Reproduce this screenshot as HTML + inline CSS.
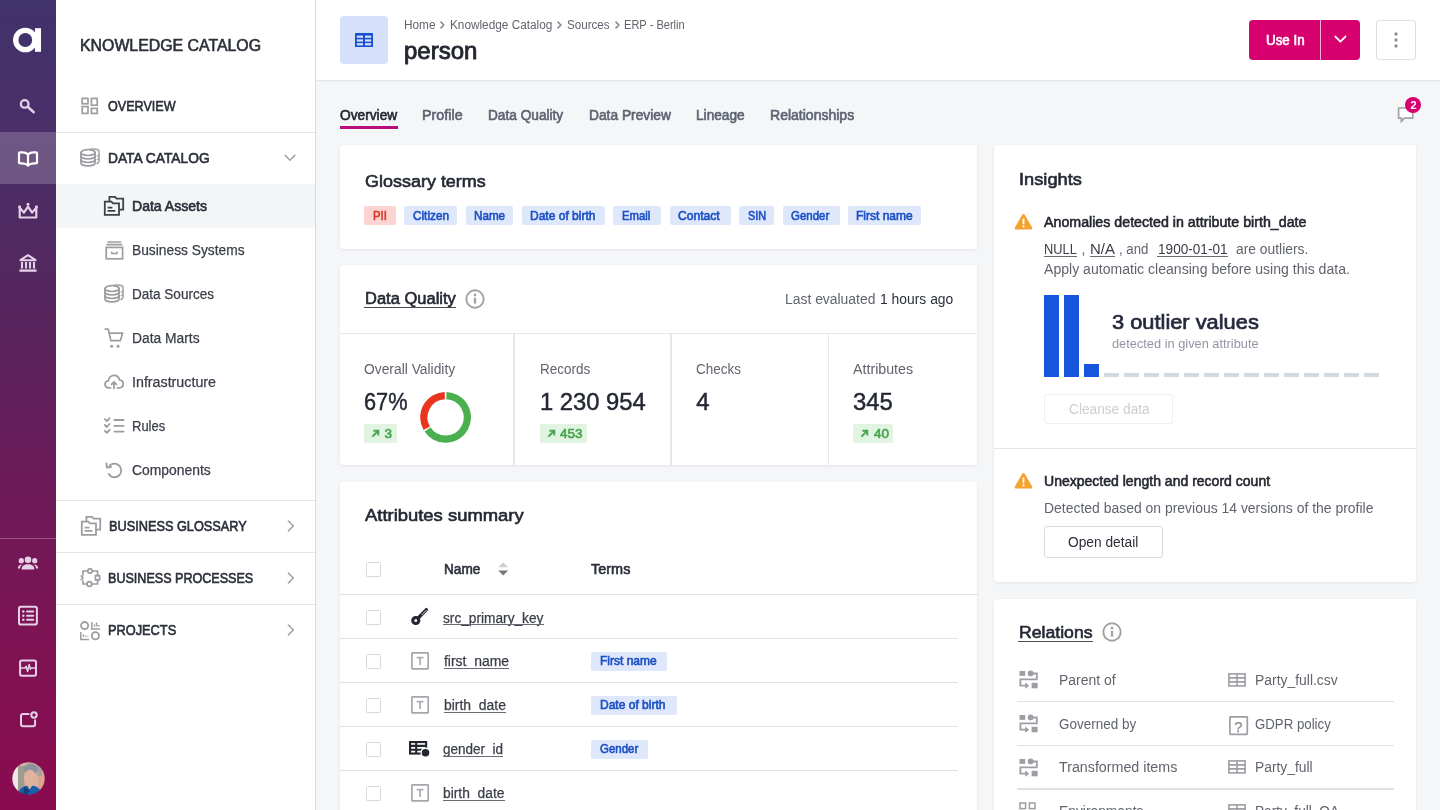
<!DOCTYPE html>
<html lang="en">
<head>
<meta charset="utf-8">
<title>person - Knowledge Catalog</title>
<style>
*{box-sizing:border-box;margin:0;padding:0}
html,body{width:1440px;height:810px;overflow:hidden;background:#f5f6f8;font-family:"Liberation Sans",Arial,sans-serif;color:#242833;-webkit-font-smoothing:antialiased}
#app{position:relative;width:1440px;height:810px;overflow:hidden;will-change:transform}
.abs{position:absolute}
svg{display:block;overflow:visible}
.t{position:absolute;white-space:nowrap;line-height:1;transform-origin:0 50%}
.med{-webkit-text-stroke:0.35px currentColor}

/* rail */
#rail{position:absolute;left:0;top:0;width:56px;height:810px;background:linear-gradient(180deg,#40326a 0%,#48306a 12%,#52285f 33%,#6a1b58 58%,#7b1454 76%,#8a0b4f 100%)}
#rail .active{position:absolute;left:0;top:132px;width:56px;height:52px;background:rgba(255,255,255,.2)}
#rail .sep{position:absolute;left:0;top:537.5px;width:56px;height:1px;background:rgba(255,255,255,.28)}
#rail svg{position:absolute}

/* sidebar */
#side{position:absolute;left:56px;top:0;width:260px;height:810px;background:#fff;border-right:1px solid #d9dadd}
#side .sep{position:absolute;left:0;width:259px;height:1px;background:#e4e5e7}
#side .sel{position:absolute;left:0;top:184px;width:259px;height:44px;background:#f4f5f7}
#side svg{position:absolute}

/* header */
#head{position:absolute;left:316px;top:0;width:1124px;height:81px;background:#fff;border-bottom:1px solid #e3e4e7;box-shadow:0 1px 2px rgba(0,0,0,.03)}
.card{position:absolute;background:#fff;border-radius:3px;box-shadow:0 1px 3px rgba(30,40,60,.09),0 0 1px rgba(30,40,60,.06)}
.tag{position:absolute;height:18px;border-radius:2px;background:#dce6fa;color:#1a4fc4;font-size:12px;line-height:18px;text-align:center;white-space:nowrap;-webkit-text-stroke:0.3px currentColor}
.tag.red{background:#fbd3d1;color:#d8382c}
.u{border-bottom:1px solid #4a4f58}
</style>
</head>
<body>
<div id="app">

<!-- ============ RAIL ============ -->
<div id="rail">
  <div class="active"></div>
  <div class="sep"></div>
  <svg style="position:absolute;left:0px;top:0px" width="56" height="80" viewBox="0 0 56 80" ><circle cx="25.3" cy="40" r="9.6" fill="none" stroke="#fff" stroke-width="5.4"/><rect x="35" y="28.2" width="6" height="23.6" fill="#fff"/></svg>
  <svg style="position:absolute;left:0px;top:80px" width="56" height="52" viewBox="0 0 56 52" ><g fill="none" stroke="#e6d0e8" stroke-width="2.3" stroke-linecap="round"><circle cx="24.7" cy="23.9" r="3.8"/><path d="M27.7 26.8 L33.7 32.2" stroke-width="2.5"/></g></svg>
  <svg style="position:absolute;left:0px;top:132px" width="56" height="52" viewBox="0 0 56 52" ><g fill="none" stroke="#fff" stroke-width="2.2" stroke-linejoin="round" stroke-linecap="round"><path d="M28 22.4 C26.6 21 24.6 20.4 22.4 20.4 H20.2 Q19 20.4 19 21.6 V30.4 Q19 31.4 20.2 31.4 H22.4 C24.6 31.4 26.6 32 28 33.6 C29.4 32 31.4 31.4 33.6 31.4 H35.8 Q37 31.4 37 30.4 V21.6 Q37 20.4 35.8 20.4 H33.6 C31.4 20.4 29.4 21 28 22.4 Z"/><path d="M28 22.6 V33.2"/></g></svg>
  <svg style="position:absolute;left:0px;top:184px" width="56" height="54" viewBox="0 0 56 54" ><path d="M19.7 23.6 V33.5 H36.3 V23.6 L32.1 28.6 L28 22.6 L23.9 28.6 Z" fill="none" stroke="#e6d0e8" stroke-width="2.2" stroke-linejoin="round"/><g fill="#e6d0e8"><circle cx="28" cy="20.2" r="1.5"/><circle cx="19.5" cy="22.8" r="1.5"/><circle cx="36.5" cy="22.8" r="1.5"/></g></svg>
  <svg style="position:absolute;left:0px;top:238px" width="56" height="52" viewBox="0 0 56 52" ><g fill="none" stroke="#e6d0e8" stroke-linejoin="round" stroke-linecap="butt"><path d="M20.4 22.2 L28 17.2 L35.6 22.2 Z" stroke-width="2.1"/><path d="M22 24 V30.6 M26 24 V30.6 M30 24 V30.6 M34 24 V30.6" stroke-width="2.1"/><path d="M19.4 32.6 H36.6" stroke-width="2.3"/></g></svg>
  <svg style="position:absolute;left:0px;top:537px" width="56" height="52" viewBox="0 0 56 52" ><g fill="#e6d0e8"><circle cx="28" cy="22.7" r="3.3"/><circle cx="21.3" cy="23.7" r="2.6"/><circle cx="34.7" cy="23.7" r="2.6"/><path d="M21.6 32.4 C21.6 28.8 24.4 27.2 28 27.2 C31.6 27.2 34.4 28.8 34.4 32.4 Z"/><path d="M17.8 31.6 C17.8 28.6 19.6 27.4 22.6 27.4 C20.8 28.4 20 29.8 20 31.6 Z"/><path d="M38.2 31.6 C38.2 28.6 36.4 27.4 33.4 27.4 C35.2 28.4 36 29.8 36 31.6 Z"/></g></svg>
  <svg style="position:absolute;left:0px;top:590px" width="56" height="52" viewBox="0 0 56 52" ><g fill="none" stroke="#e6d0e8" stroke-width="2" stroke-linecap="round"><rect x="19" y="16.8" width="17.9" height="17.8" rx="1.8"/><path d="M27 21.6 H33.2 M27 25.7 H33.2 M27 29.8 H33.2"/></g><g fill="#e6d0e8"><circle cx="23.3" cy="21.6" r="1.25"/><circle cx="23.3" cy="25.7" r="1.25"/><circle cx="23.3" cy="29.8" r="1.25"/></g></svg>
  <svg style="position:absolute;left:0px;top:642px" width="56" height="52" viewBox="0 0 56 52" ><g fill="none" stroke="#e6d0e8" stroke-linejoin="round" stroke-linecap="round"><rect x="20.1" y="18.4" width="15.9" height="15.3" rx="1.6" stroke-width="2"/><path d="M20.6 26 H25 L26.2 24.2 L27.6 29.6 L29.2 22.4 L30.4 27.2 L31.2 26 H35.6" stroke-width="1.5"/></g></svg>
  <svg style="position:absolute;left:0px;top:694px" width="56" height="52" viewBox="0 0 56 52" ><g fill="none" stroke="#e6d0e8" stroke-width="2" stroke-linejoin="round" stroke-linecap="round"><path d="M28.6 19.9 H23.2 Q21 19.9 21 22.1 V30 Q21 32.2 23.2 32.2 H32.9 Q35.1 32.2 35.1 30 V26.2"/><circle cx="34" cy="21" r="2.7"/></g></svg>
  <svg style="position:absolute;left:11.6px;top:761.6px" width="33" height="33" viewBox="0 0 33 33" ><defs><clipPath id="av"><circle cx="16.5" cy="16.5" r="16.2"/></clipPath><filter id="avb" x="-10%" y="-10%" width="120%" height="120%"><feGaussianBlur stdDeviation="0.7"/></filter></defs>
<g clip-path="url(#av)"><g filter="url(#avb)"><rect x="-2" y="-2" width="37" height="37" fill="#d8b3a4"/><rect x="-2" y="-2" width="8" height="37" fill="#ece8e6"/><rect x="6" y="4" width="6.4" height="30" fill="#a09c8f"/><rect x="26" y="6" width="9" height="20" fill="#dfa48f"/><rect x="25" y="2" width="5" height="12" fill="#a7a3a6"/>
<path d="M5 35 C6 26.5 11 23.4 18 23.4 C25 23.4 29.6 26.5 30.4 35 Z" fill="#1f5ea6"/>
<ellipse cx="18.6" cy="7.2" rx="7.2" ry="5.6" fill="#8d939d"/>
<ellipse cx="18" cy="15.6" rx="5.9" ry="7.9" fill="#e0b39d"/>
<path d="M14.6 22.6 L17.6 27.6 L21 22.6 Z" fill="#e0b39d"/>
<path d="M12.4 24.6 L17.6 29 L15 33 H11 Z" fill="#173f77"/></g></g></svg>
</div>

<!-- ============ SIDEBAR ============ -->
<div id="side">
  <div class="sel"></div>
  <span class="t" style="left:24.0px;top:37.6px;font-size:16px;color:#2b2f39;-webkit-text-stroke:0.6px currentColor;transform:scaleX(0.9915);">KNOWLEDGE CATALOG</span>
  <svg style="position:absolute;left:25px;top:97px" width="18" height="18" viewBox="0 0 18 18" ><g fill="none" stroke="#9b9da1" stroke-width="1.7"><rect x="1.2" y="1.4" width="5.8" height="5.4"/><rect x="10.4" y="1.4" width="5.8" height="6.8"/><rect x="1.2" y="9.6" width="5.8" height="6.8"/><rect x="10.4" y="11.4" width="5.8" height="5"/></g></svg>
  <span class="t" style="left:52.4px;top:99.2px;font-size:14px;color:#2b2f39;-webkit-text-stroke:0.6px currentColor;transform:scaleX(0.8989);">OVERVIEW</span>
  <div class="sep" style="top:132px"></div>
  <svg style="position:absolute;left:24px;top:148.4px" width="20" height="19" viewBox="0 0 20 19" ><g fill="none" stroke="#9b9da1" stroke-width="1.7" stroke-linecap="round">
<ellipse cx="8" cy="4.6" rx="7" ry="2.9"/>
<path d="M1 4.6 V15 C1 16.6 4.1 17.9 8 17.9 C11.9 17.9 15 16.6 15 15 V4.6"/>
<path d="M1 8.1 C1 9.7 4.1 11 8 11 C11.9 11 15 9.7 15 8.1"/>
<path d="M1 11.6 C1 13.2 4.1 14.5 8 14.5 C11.9 14.5 15 13.2 15 11.6"/>
<path d="M10.5 1.2 C14.6 0.4 19 1.4 19 3.2 V13.4 C19 14.4 18.2 15 17 15.5" stroke-width="1.4"/>
<path d="M19 6.7 C19 7.3 18.4 7.8 17.2 8.2 M19 10.2 C19 10.8 18.4 11.3 17.2 11.7" stroke-width="1.3"/>
</g></svg>
  <span class="t" style="left:52.4px;top:151.2px;font-size:14px;color:#2b2f39;-webkit-text-stroke:0.6px currentColor;transform:scaleX(0.9845);">DATA CATALOG</span>
  <svg style="position:absolute;left:228px;top:154px" width="12" height="8" viewBox="0 0 12 8" ><path d="M1.2 1.4 L6 6.2 L10.8 1.4" fill="none" stroke="#a3a5a9" stroke-width="1.6" stroke-linecap="round" stroke-linejoin="round"/></svg>
  <svg style="position:absolute;left:48.2px;top:196.2px" width="20" height="20" viewBox="0 0 20 20" ><g fill="none" stroke="#3d414b" stroke-width="1.8" stroke-linejoin="miter">
<path d="M5.4 5.2 V0.9 H11 L12.6 2.6 H19.2 V13.6 H15.4"/>
<path d="M0.8 5.6 H7.4 L9 7.4 H15 V18.8 H0.8 Z"/>
<path d="M3.6 11.6 H8.4 M3.6 14.8 H11.4" stroke-width="1.7"/></g></svg>
  <span class="t" style="left:76.4px;top:199.2px;font-size:14px;color:#2b2f39;-webkit-text-stroke:0.6px currentColor;transform:scaleX(1.0040);">Data Assets</span>
  <svg style="position:absolute;left:48.599999999999994px;top:240.6px" width="19" height="19" viewBox="0 0 19 19" ><g fill="none" stroke="#9b9da1" stroke-width="1.7"><path d="M2.4 1 H16.2 M1.4 3.6 H17.2"/><rect x="1.2" y="6.4" width="16.4" height="11.4"/><path d="M6.8 10.6 V12.6 H12 V10.6" stroke-width="1.5"/></g></svg>
  <span class="t" style="left:76.4px;top:243.2px;font-size:14px;color:#3a3e48;-webkit-text-stroke:0.25px currentColor;transform:scaleX(0.9845);">Business Systems</span>
  <svg style="position:absolute;left:48px;top:284.4px" width="20" height="19" viewBox="0 0 20 19" ><g fill="none" stroke="#9b9da1" stroke-width="1.7" stroke-linecap="round">
<ellipse cx="8" cy="4.6" rx="7" ry="2.9"/>
<path d="M1 4.6 V15 C1 16.6 4.1 17.9 8 17.9 C11.9 17.9 15 16.6 15 15 V4.6"/>
<path d="M1 8.1 C1 9.7 4.1 11 8 11 C11.9 11 15 9.7 15 8.1"/>
<path d="M1 11.6 C1 13.2 4.1 14.5 8 14.5 C11.9 14.5 15 13.2 15 11.6"/>
<path d="M10.5 1.2 C14.6 0.4 19 1.4 19 3.2 V13.4 C19 14.4 18.2 15 17 15.5" stroke-width="1.4"/>
<path d="M19 6.7 C19 7.3 18.4 7.8 17.2 8.2 M19 10.2 C19 10.8 18.4 11.3 17.2 11.7" stroke-width="1.3"/>
</g></svg>
  <span class="t" style="left:76.4px;top:287.2px;font-size:14px;color:#3a3e48;-webkit-text-stroke:0.25px currentColor;transform:scaleX(0.9667);">Data Sources</span>
  <svg style="position:absolute;left:48px;top:327.6px" width="20" height="21" viewBox="0 0 20 21" ><g fill="none" stroke="#9b9da1" stroke-width="1.7" stroke-linejoin="round"><path d="M0.6 1.2 H4.2 L5.2 5.2 M5.2 5.2 H18.6 L16.4 12.6 H6.8 Z"/></g><g fill="#9b9da1"><circle cx="7.6" cy="18.2" r="1.5"/><circle cx="14" cy="18.2" r="1.5"/></g></svg>
  <span class="t" style="left:76.4px;top:331.2px;font-size:14px;color:#3a3e48;-webkit-text-stroke:0.25px currentColor;transform:scaleX(0.9873);">Data Marts</span>
  <svg style="position:absolute;left:48px;top:374.4px" width="20" height="16" viewBox="0 0 20 16" ><g fill="none" stroke="#9b9da1" stroke-width="1.8" stroke-linecap="round" stroke-linejoin="round"><path d="M6.6 13.8 H4.8 C2.4 13.8 1 12.2 1 10.2 C1 8.2 2.6 6.8 4.4 6.8 C4.8 3.6 7.2 1.4 10 1.4 C12.8 1.4 14.8 3.2 15.4 5.8 C17.6 6 19.2 7.6 19.2 9.8 C19.2 12.2 17.6 13.8 15.4 13.8 H13.4"/><path d="M10 14.4 V8.4 M7.6 10.4 L10 8 L12.4 10.4"/></g></svg>
  <span class="t" style="left:76.4px;top:375.2px;font-size:14px;color:#3a3e48;-webkit-text-stroke:0.25px currentColor;transform:scaleX(1.0184);">Infrastructure</span>
  <svg style="position:absolute;left:48px;top:417px" width="21" height="18" viewBox="0 0 21 18" ><g fill="none" stroke="#9b9da1" stroke-width="1.8" stroke-linecap="round" stroke-linejoin="round"><path d="M0.9 2.2 L2.9 4.2 L5.6 1.2 M0.9 8 L2.9 10 L5.6 7 M0.9 13.8 L2.9 15.8 L5.6 12.8"/><path d="M10.4 3 H19.6 M10.4 8.8 H19.6 M10.4 14.6 H19.6"/></g></svg>
  <span class="t" style="left:76.4px;top:419.2px;font-size:14px;color:#3a3e48;-webkit-text-stroke:0.25px currentColor;transform:scaleX(0.9275);">Rules</span>
  <svg style="position:absolute;left:49px;top:461.6px" width="18" height="17" viewBox="0 0 18 17" ><g fill="none" stroke="#9b9da1" stroke-width="1.85" stroke-linecap="round" stroke-linejoin="round"><path d="M4.6 3.6 C6 2.2 7.6 1.6 9.4 1.6 C13.2 1.6 16.2 4.6 16.2 8.4 C16.2 12.2 13.2 15.2 9.4 15.2 C7 15.2 4.9 14 3.7 12"/><path d="M1.4 1.4 L1.9 5.6 L6 5"/></g></svg>
  <span class="t" style="left:76.4px;top:463.2px;font-size:14px;color:#3a3e48;-webkit-text-stroke:0.25px currentColor;transform:scaleX(0.9926);">Components</span>
  <div class="sep" style="top:500px"></div>
  <svg style="position:absolute;left:24.599999999999994px;top:516px" width="20" height="20" viewBox="0 0 20 20" ><g fill="none" stroke="#9b9da1" stroke-width="1.8" stroke-linejoin="miter">
<path d="M5.4 5.2 V0.9 H11 L12.6 2.6 H19.2 V13.6 H15.4"/>
<path d="M0.8 5.6 H7.4 L9 7.4 H15 V18.8 H0.8 Z"/>
<path d="M3.6 11.6 H8.4 M3.6 14.8 H11.4" stroke-width="1.7"/></g></svg>
  <span class="t" style="left:53.2px;top:519.2px;font-size:14px;color:#2b2f39;-webkit-text-stroke:0.6px currentColor;transform:scaleX(0.9098);">BUSINESS GLOSSARY</span>
  <svg style="position:absolute;left:230.60000000000002px;top:520px" width="8" height="12" viewBox="0 0 8 12" ><path d="M1.4 1.2 L6.4 6 L1.4 10.8" fill="none" stroke="#a3a5a9" stroke-width="1.6" stroke-linecap="round" stroke-linejoin="round"/></svg>
  <div class="sep" style="top:552px"></div>
  <svg style="position:absolute;left:23.599999999999994px;top:568.2px" width="21" height="20" viewBox="0 0 21 20" ><g fill="none" stroke="#9b9da1" stroke-width="1.7" stroke-linejoin="round"><circle cx="10" cy="3" r="2.2"/><rect x="15.4" y="7.6" width="4.2" height="4.2"/><circle cx="9.4" cy="16" r="2.4"/><path d="M0.8 7.4 L3 9.8 L0.8 12.2"/><path d="M7.8 3 H3 V7.4 M3 12.2 V16 H7 M11.8 16 H17.6 V11.8 M17.6 7.6 V3 H12.2"/></g></svg>
  <span class="t" style="left:52.4px;top:571.2px;font-size:14px;color:#2b2f39;-webkit-text-stroke:0.6px currentColor;transform:scaleX(0.8972);">BUSINESS PROCESSES</span>
  <svg style="position:absolute;left:230.60000000000002px;top:572px" width="8" height="12" viewBox="0 0 8 12" ><path d="M1.4 1.2 L6.4 6 L1.4 10.8" fill="none" stroke="#a3a5a9" stroke-width="1.6" stroke-linecap="round" stroke-linejoin="round"/></svg>
  <div class="sep" style="top:604px"></div>
  <svg style="position:absolute;left:23.599999999999994px;top:620.6px" width="21" height="20" viewBox="0 0 21 20" ><g fill="none" stroke="#9b9da1" stroke-width="1.8"><circle cx="4.6" cy="4.6" r="3.6"/><circle cx="15.4" cy="14.8" r="3.6"/></g><g fill="none" stroke="#9b9da1" stroke-width="1.5"><path d="M11.8 1 V8 H20 M14.4 3.4 V5.4 M16.6 1.6 V5.4 M18.8 4 V5.4"/><path d="M0.8 11 V18.4 H9 M3.4 13.4 V15.8 M5.6 14.6 V15.8 M7.8 15 V15.8"/></g></svg>
  <span class="t" style="left:52.4px;top:623.2px;font-size:14px;color:#2b2f39;-webkit-text-stroke:0.6px currentColor;transform:scaleX(0.9131);">PROJECTS</span>
  <svg style="position:absolute;left:230.60000000000002px;top:624px" width="8" height="12" viewBox="0 0 8 12" ><path d="M1.4 1.2 L6.4 6 L1.4 10.8" fill="none" stroke="#a3a5a9" stroke-width="1.6" stroke-linecap="round" stroke-linejoin="round"/></svg>
</div>

<!-- ============ HEADER ============ -->
<div id="head">
  <div class="abs" style="left:24px;top:16px;width:48px;height:48px;border-radius:4px;background:#d5e0fa"></div>
  <svg style="position:absolute;left:39px;top:33px" width="18" height="14" viewBox="0 0 18 14" ><rect x="0" y="0" width="18" height="14" rx="0.6" fill="#1a4fd0"/><g fill="#d5e0fa"><rect x="1.8" y="2.6" width="6.2" height="2.2"/><rect x="10" y="2.6" width="6.2" height="2.2"/><rect x="1.8" y="6.4" width="6.2" height="2.2"/><rect x="10" y="6.4" width="6.2" height="2.2"/><rect x="1.8" y="10.2" width="6.2" height="2.2"/><rect x="10" y="10.2" width="6.2" height="2.2"/></g></svg>
  <span class="t" style="left:88.0px;top:18.8px;font-size:12px;color:#60646d;transform:scaleX(0.9839);">Home</span>
  <span class="t" style="left:134.3px;top:18.8px;font-size:12px;color:#60646d;transform:scaleX(0.9829);">Knowledge Catalog</span>
  <span class="t" style="left:250.9px;top:18.8px;font-size:12px;color:#60646d;transform:scaleX(0.9675);">Sources</span>
  <span class="t" style="left:308.3px;top:18.8px;font-size:12px;color:#60646d;transform:scaleX(0.9223);">ERP - Berlin</span>
  <svg style="position:absolute;left:124.30000000000001px;top:21px" width="5" height="8" viewBox="0 0 5 8" ><path d="M1 1.1 L3.9 4 L1 6.9" fill="none" stroke="#80848c" stroke-width="1.5" stroke-linecap="round" stroke-linejoin="round"/></svg>
  <svg style="position:absolute;left:241.39999999999998px;top:21px" width="5" height="8" viewBox="0 0 5 8" ><path d="M1 1.1 L3.9 4 L1 6.9" fill="none" stroke="#80848c" stroke-width="1.5" stroke-linecap="round" stroke-linejoin="round"/></svg>
  <svg style="position:absolute;left:298.5px;top:21px" width="5" height="8" viewBox="0 0 5 8" ><path d="M1 1.1 L3.9 4 L1 6.9" fill="none" stroke="#80848c" stroke-width="1.5" stroke-linecap="round" stroke-linejoin="round"/></svg>
  <span class="t" style="left:88.0px;top:39.0px;font-size:24px;color:#23262f;-webkit-text-stroke:0.6px currentColor;transform:scaleX(1.0001);-webkit-text-stroke:0.85px currentColor;">person</span>
  <div class="abs" style="left:933px;top:20px;width:111px;height:40px;border-radius:4px;background:#d6006e"></div>
  <div class="abs" style="left:1004px;top:20px;width:1px;height:40px;background:#f3b6d6"></div>
  <span class="t" style="left:949.6px;top:33.2px;font-size:14px;color:#fff;-webkit-text-stroke:0.6px currentColor;transform:scaleX(0.9563);">Use In</span>
  <svg style="position:absolute;left:1018px;top:35.4px" width="13" height="9" viewBox="0 0 13 9" ><path d="M1.4 1.6 L6.4 6.6 L11.4 1.6" fill="none" stroke="#fff" stroke-width="1.9" stroke-linecap="round" stroke-linejoin="round"/></svg>
  <div class="abs" style="left:1060px;top:20px;width:39.6px;height:40px;border-radius:3px;background:#fff;border:1px solid #dcdfe3"></div>
  <svg style="position:absolute;left:1077px;top:31px" width="6" height="18" viewBox="0 0 6 18" ><g fill="#8e9197"><circle cx="3" cy="3" r="1.7"/><circle cx="3" cy="9" r="1.7"/><circle cx="3" cy="15" r="1.7"/></g></svg>
</div>

<span class="t" style="left:340.3px;top:108.2px;font-size:14px;color:#23262f;-webkit-text-stroke:0.6px currentColor;transform:scaleX(0.9801);">Overview</span>
<span class="t" style="left:421.9px;top:108.2px;font-size:14px;color:#5d6370;-webkit-text-stroke:0.6px currentColor;transform:scaleX(1.0230);">Profile</span>
<span class="t" style="left:488.3px;top:108.2px;font-size:14px;color:#5d6370;-webkit-text-stroke:0.6px currentColor;transform:scaleX(0.9760);">Data Quality</span>
<span class="t" style="left:589.0px;top:108.2px;font-size:14px;color:#5d6370;-webkit-text-stroke:0.6px currentColor;transform:scaleX(0.9836);">Data Preview</span>
<span class="t" style="left:696.3px;top:108.2px;font-size:14px;color:#5d6370;-webkit-text-stroke:0.6px currentColor;transform:scaleX(0.9754);">Lineage</span>
<span class="t" style="left:770.4px;top:108.2px;font-size:14px;color:#5d6370;-webkit-text-stroke:0.6px currentColor;transform:scaleX(1.0016);">Relationships</span>
<div class="abs" style="left:340px;top:126.3px;width:58px;height:2.4px;background:#b80d7c"></div>
<svg style="position:absolute;left:1397.4px;top:106px" width="18" height="18" viewBox="0 0 18 18" ><path d="M1.6 2 H15.8 V12.2 H7.4 L4.4 15.4 V12.2 H1.6 Z" fill="#fff" stroke="#a0a3a8" stroke-width="1.7" stroke-linejoin="miter"/></svg>
<div class="abs" style="left:1405.2px;top:97.2px;width:16px;height:16px;border-radius:8px;background:#d6006e"></div>
<span class="t" style="left:1410.4px;top:99.8px;font-size:11px;color:#fff;font-weight:700;">2</span>

<div class="card" style="left:340px;top:145px;width:637.2px;height:103.6px"></div>
<span class="t" style="left:364.5px;top:172.9px;font-size:17px;color:#242833;-webkit-text-stroke:0.6px currentColor;transform:scaleX(1.0569);">Glossary terms</span>
<div class="abs" style="left:364.4px;top:206.0px;width:31.6px;height:18.8px;border-radius:2px;background:#fbd3d1"></div><span class="t" style="left:372.6px;top:209.7px;font-size:12px;color:#d8382c;-webkit-text-stroke:0.6px currentColor;transform:scaleX(0.9406);">PII</span>
<div class="abs" style="left:404.3px;top:206.0px;width:53.1px;height:18.8px;border-radius:2px;background:#dfe8fb"></div><span class="t" style="left:412.5px;top:209.7px;font-size:12px;color:#1a4fc4;-webkit-text-stroke:0.6px currentColor;transform:scaleX(0.9813);">Citizen</span>
<div class="abs" style="left:466.1px;top:206.0px;width:47.2px;height:18.8px;border-radius:2px;background:#dfe8fb"></div><span class="t" style="left:474.3px;top:209.7px;font-size:12px;color:#1a4fc4;-webkit-text-stroke:0.6px currentColor;transform:scaleX(0.9714);">Name</span>
<div class="abs" style="left:522.0px;top:206.0px;width:82.5px;height:18.8px;border-radius:2px;background:#dfe8fb"></div><span class="t" style="left:530.2px;top:209.7px;font-size:12px;color:#1a4fc4;-webkit-text-stroke:0.6px currentColor;transform:scaleX(1.0019);">Date of birth</span>
<div class="abs" style="left:613.3px;top:206.0px;width:48.1px;height:18.8px;border-radius:2px;background:#dfe8fb"></div><span class="t" style="left:621.5px;top:209.7px;font-size:12px;color:#1a4fc4;-webkit-text-stroke:0.6px currentColor;transform:scaleX(0.9462);">Email</span>
<div class="abs" style="left:670.1px;top:206.0px;width:60.5px;height:18.8px;border-radius:2px;background:#dfe8fb"></div><span class="t" style="left:678.3px;top:209.7px;font-size:12px;color:#1a4fc4;-webkit-text-stroke:0.6px currentColor;transform:scaleX(1.0058);">Contact</span>
<div class="abs" style="left:739.3px;top:206.0px;width:34.8px;height:18.8px;border-radius:2px;background:#dfe8fb"></div><span class="t" style="left:747.5px;top:209.7px;font-size:12px;color:#1a4fc4;-webkit-text-stroke:0.6px currentColor;transform:scaleX(0.9093);">SIN</span>
<div class="abs" style="left:782.8px;top:206.0px;width:56.9px;height:18.8px;border-radius:2px;background:#dfe8fb"></div><span class="t" style="left:791.0px;top:209.7px;font-size:12px;color:#1a4fc4;-webkit-text-stroke:0.6px currentColor;transform:scaleX(0.9543);">Gender</span>
<div class="abs" style="left:847.9px;top:206.0px;width:73.3px;height:18.8px;border-radius:2px;background:#dfe8fb"></div><span class="t" style="left:856.1px;top:209.7px;font-size:12px;color:#1a4fc4;-webkit-text-stroke:0.6px currentColor;transform:scaleX(1.0002);">First name</span>
<div class="card" style="left:340px;top:265.2px;width:637.2px;height:200px"></div>
<span class="t" style="left:364.6px;top:291.0px;font-size:16.6px;color:#242833;-webkit-text-stroke:0.6px currentColor;transform:scaleX(0.9944);">Data Quality</span>
<div class="abs" style="left:364.4px;top:306.5px;width:91.4px;height:1.1px;background:#464a53"></div>
<svg style="position:absolute;left:464.7px;top:289.1px" width="20" height="20" viewBox="0 0 20 20" ><circle cx="10" cy="10" r="8.7" fill="none" stroke="#a0a2a6" stroke-width="1.9"/><rect x="8.85" y="8.7" width="2.3" height="5.9" fill="#a0a2a6"/><circle cx="10" cy="5.9" r="1.3" fill="#a0a2a6"/></svg>
<span class="t" style="left:785.1px;top:292.2px;font-size:14px;color:#60646d;transform:scaleX(0.9926);">Last evaluated</span>
<span class="t" style="left:879.6px;top:292.2px;font-size:14px;color:#2b2f39;transform:scaleX(0.9912);">1 hours ago</span>
<div class="abs" style="left:340px;top:333px;width:637.5px;height:1.4px;background:#e6e7ea"></div>
<div class="abs" style="left:513.2px;top:334px;width:1.4px;height:131px;background:#e6e7ea"></div>
<div class="abs" style="left:670.4px;top:334px;width:1.4px;height:131px;background:#e6e7ea"></div>
<div class="abs" style="left:827.6px;top:334px;width:1.4px;height:131px;background:#e6e7ea"></div>
<span class="t" style="left:364.4px;top:361.9px;font-size:14px;color:#60646d;transform:scaleX(0.9878);">Overall Validity</span>
<span class="t" style="left:364.4px;top:389.7px;font-size:24px;color:#242833;transform:scaleX(0.9054);-webkit-text-stroke:0.45px currentColor;">67%</span>
<div class="abs" style="left:364.4px;top:423.5px;width:32.2px;height:19px;border-radius:2px;background:#e1f3e1"></div><svg style="position:absolute;left:371.4px;top:428.9px" width="9" height="9" viewBox="0 0 9 9" ><path d="M1.4 7.6 L6.8 2.2 M2.4 1.7 H7.3 V6.6" fill="none" stroke="#46a54c" stroke-width="1.9" stroke-linecap="butt" stroke-linejoin="miter"/></svg><span class="t" style="left:384.5px;top:426.6px;font-size:13.5px;color:#46a54c;-webkit-text-stroke:0.6px currentColor;">3</span>
<svg class="abs" style="left:0;top:0" width="1440" height="810"><path d="M446.43 395.67 A21.75 21.75 0 1 1 427.57 429.56" fill="none" stroke="#4bae4f" stroke-width="7.3"/><path d="M426.76 428.27 A21.75 21.75 0 0 1 444.77 395.67" fill="none" stroke="#e8351f" stroke-width="7.3"/></svg>
<span class="t" style="left:539.5px;top:361.9px;font-size:14px;color:#60646d;transform:scaleX(0.9666);">Records</span>
<span class="t" style="left:539.5px;top:389.7px;font-size:24px;color:#242833;transform:scaleX(0.9908);-webkit-text-stroke:0.45px currentColor;">1 230 954</span>
<div class="abs" style="left:539.5px;top:423.5px;width:47.8px;height:19px;border-radius:2px;background:#e1f3e1"></div><svg style="position:absolute;left:546.5px;top:428.9px" width="9" height="9" viewBox="0 0 9 9" ><path d="M1.4 7.6 L6.8 2.2 M2.4 1.7 H7.3 V6.6" fill="none" stroke="#46a54c" stroke-width="1.9" stroke-linecap="butt" stroke-linejoin="miter"/></svg><span class="t" style="left:559.6px;top:426.6px;font-size:13.5px;color:#46a54c;-webkit-text-stroke:0.6px currentColor;transform:scaleX(0.9986);">453</span>
<span class="t" style="left:696.2px;top:361.9px;font-size:14px;color:#60646d;transform:scaleX(0.9639);">Checks</span>
<span class="t" style="left:696.2px;top:389.7px;font-size:24px;color:#242833;-webkit-text-stroke:0.45px currentColor;">4</span>
<span class="t" style="left:853.4px;top:361.9px;font-size:14px;color:#60646d;transform:scaleX(1.0162);">Attributes</span>
<span class="t" style="left:853.4px;top:389.7px;font-size:24px;color:#242833;transform:scaleX(0.9963);-webkit-text-stroke:0.45px currentColor;">345</span>
<div class="abs" style="left:853.4px;top:423.5px;width:40.0px;height:19px;border-radius:2px;background:#e1f3e1"></div><svg style="position:absolute;left:860.4px;top:428.9px" width="9" height="9" viewBox="0 0 9 9" ><path d="M1.4 7.6 L6.8 2.2 M2.4 1.7 H7.3 V6.6" fill="none" stroke="#46a54c" stroke-width="1.9" stroke-linecap="butt" stroke-linejoin="miter"/></svg><span class="t" style="left:873.5px;top:426.6px;font-size:13.5px;color:#46a54c;-webkit-text-stroke:0.6px currentColor;transform:scaleX(0.9979);">40</span>
<div class="card" style="left:340px;top:482px;width:637.2px;height:340px"></div>
<span class="t" style="left:365.0px;top:506.9px;font-size:17px;color:#242833;-webkit-text-stroke:0.6px currentColor;transform:scaleX(1.0837);">Attributes summary</span>
<div class="abs" style="left:366.4px;top:561.6px;width:15px;height:15px;border:1.2px solid #d6d8dc;border-radius:1.5px;background:#fff"></div>
<span class="t" style="left:443.6px;top:562.3px;font-size:14px;color:#2b2f39;-webkit-text-stroke:0.6px currentColor;transform:scaleX(0.9743);">Name</span>
<svg style="position:absolute;left:497.7px;top:562.4px" width="10.4" height="14" viewBox="0 0 10.4 14" ><path d="M5.2 0.2 L10.2 5.2 H0.2 Z" fill="#cdcfd3"/><path d="M5.2 13.6 L10.2 8.6 H0.2 Z" fill="#74777d"/></svg>
<span class="t" style="left:591.3px;top:562.3px;font-size:14px;color:#2b2f39;-webkit-text-stroke:0.6px currentColor;transform:scaleX(1.0334);">Terms</span>
<div class="abs" style="left:340px;top:594px;width:637.5px;height:1.2px;background:#dfe1e5"></div>
<div class="abs" style="left:366.4px;top:609.7px;width:15px;height:15px;border:1.2px solid #d6d8dc;border-radius:1.5px;background:#fff"></div>
<svg style="position:absolute;left:411px;top:609.4px" width="17" height="16" viewBox="0 0 17 16" ><path d="M7.2 9 L15.4 0.6" fill="none" stroke="#23262f" stroke-width="3.3" stroke-linecap="round"/><path d="M10.6 6 L15.6 0.9" fill="none" stroke="#fff" stroke-width="0.8"/><circle cx="4.8" cy="11.5" r="3.05" fill="#fff" stroke="#23262f" stroke-width="3.1"/></svg>
<span class="t" style="left:443.2px;top:610.6px;font-size:14px;color:#3a3e48;-webkit-text-stroke:0.25px currentColor;transform:scaleX(0.9776);">src_primary_key</span>
<div class="abs" style="left:443.2px;top:624.0px;width:100.4px;height:1px;background:#686c74"></div>
<div class="abs" style="left:340px;top:638.2px;width:618px;height:1.2px;background:#dfe1e5"></div>
<div class="abs" style="left:366.4px;top:653.5px;width:15px;height:15px;border:1.2px solid #d6d8dc;border-radius:1.5px;background:#fff"></div>
<svg style="position:absolute;left:410.6px;top:652.3000000000001px" width="18" height="18" viewBox="0 0 18 18" ><rect x="0.9" y="0.9" width="16.3" height="15.9" rx="0.3" fill="none" stroke="#a4a7ac" stroke-width="1.7"/><path d="M5.7 5.7 H12.5 M9.1 5.7 V12.9" fill="none" stroke="#abaeb3" stroke-width="1.7"/></svg>
<span class="t" style="left:444.1px;top:654.4px;font-size:14px;color:#3a3e48;-webkit-text-stroke:0.25px currentColor;transform:scaleX(0.9960);">first_name</span>
<div class="abs" style="left:444.1px;top:667.8px;width:65.1px;height:1px;background:#686c74"></div>
<div class="abs" style="left:591.3px;top:651.6px;width:76.0px;height:19px;border-radius:2px;background:#dfe8fb"></div><span class="t" style="left:599.5px;top:655.4px;font-size:12px;color:#1a4fc4;-webkit-text-stroke:0.6px currentColor;transform:scaleX(1.0002);">First name</span>
<div class="abs" style="left:340px;top:682.0px;width:618px;height:1.2px;background:#dfe1e5"></div>
<div class="abs" style="left:366.4px;top:697.5px;width:15px;height:15px;border:1.2px solid #d6d8dc;border-radius:1.5px;background:#fff"></div>
<svg style="position:absolute;left:410.6px;top:696.3000000000001px" width="18" height="18" viewBox="0 0 18 18" ><rect x="0.9" y="0.9" width="16.3" height="15.9" rx="0.3" fill="none" stroke="#a4a7ac" stroke-width="1.7"/><path d="M5.7 5.7 H12.5 M9.1 5.7 V12.9" fill="none" stroke="#abaeb3" stroke-width="1.7"/></svg>
<span class="t" style="left:444.1px;top:698.4px;font-size:14px;color:#3a3e48;-webkit-text-stroke:0.25px currentColor;transform:scaleX(0.9939);">birth_date</span>
<div class="abs" style="left:444.1px;top:711.8px;width:61.9px;height:1px;background:#686c74"></div>
<div class="abs" style="left:591.3px;top:695.6px;width:85.7px;height:19px;border-radius:2px;background:#dfe8fb"></div><span class="t" style="left:599.5px;top:699.4px;font-size:12px;color:#1a4fc4;-webkit-text-stroke:0.6px currentColor;transform:scaleX(1.0019);">Date of birth</span>
<div class="abs" style="left:340px;top:726.0px;width:618px;height:1.2px;background:#dfe1e5"></div>
<div class="abs" style="left:366.4px;top:741.5px;width:15px;height:15px;border:1.2px solid #d6d8dc;border-radius:1.5px;background:#fff"></div>
<svg style="position:absolute;left:409.4px;top:741.2px" width="22" height="17" viewBox="0 0 22 17" ><g fill="none" stroke="#23262f" stroke-width="2.1"><rect x="1.05" y="1.05" width="16.1" height="11.5"/><path d="M1 4.9 H17.1 M1 8.75 H17.1 M7.2 1 V12.5"/></g><circle cx="16.5" cy="11.7" r="5.1" fill="#fff"/><circle cx="16.5" cy="11.7" r="3.8" fill="#23262f"/></svg>
<span class="t" style="left:443.2px;top:742.4px;font-size:14px;color:#3a3e48;-webkit-text-stroke:0.25px currentColor;transform:scaleX(0.9650);">gender_id</span>
<div class="abs" style="left:443.2px;top:755.8px;width:60.1px;height:1px;background:#686c74"></div>
<div class="abs" style="left:591.3px;top:739.6px;width:56.3px;height:19px;border-radius:2px;background:#dfe8fb"></div><span class="t" style="left:599.5px;top:743.4px;font-size:12px;color:#1a4fc4;-webkit-text-stroke:0.6px currentColor;transform:scaleX(0.9543);">Gender</span>
<div class="abs" style="left:340px;top:770.0px;width:618px;height:1.2px;background:#dfe1e5"></div>
<div class="abs" style="left:366.4px;top:785.5px;width:15px;height:15px;border:1.2px solid #d6d8dc;border-radius:1.5px;background:#fff"></div>
<svg style="position:absolute;left:410.6px;top:784.3000000000001px" width="18" height="18" viewBox="0 0 18 18" ><rect x="0.9" y="0.9" width="16.3" height="15.9" rx="0.3" fill="none" stroke="#a4a7ac" stroke-width="1.7"/><path d="M5.7 5.7 H12.5 M9.1 5.7 V12.9" fill="none" stroke="#abaeb3" stroke-width="1.7"/></svg>
<span class="t" style="left:443.2px;top:786.4px;font-size:14px;color:#3a3e48;-webkit-text-stroke:0.25px currentColor;transform:scaleX(0.9859);">birth_date</span>
<div class="abs" style="left:443.2px;top:799.8px;width:61.4px;height:1px;background:#686c74"></div>

<div class="card" style="left:994.2px;top:145px;width:421.8px;height:436.5px"></div>
<span class="t" style="left:1018.8px;top:171.2px;font-size:17px;color:#242833;-webkit-text-stroke:0.6px currentColor;transform:scaleX(1.0735);">Insights</span>
<svg style="position:absolute;left:1014.4px;top:213.4px" width="19" height="17" viewBox="0 0 19 17" ><path d="M9.5 1 C10.1 1 10.6 1.3 10.9 1.9 L18.1 14.4 C18.7 15.4 18 16.4 16.9 16.4 H2.1 C1 16.4 0.3 15.4 0.9 14.4 L8.1 1.9 C8.4 1.3 8.9 1 9.5 1 Z" fill="#f6a22e"/><rect x="8.6" y="5.6" width="1.8" height="5.6" rx="0.6" fill="#fff"/><circle cx="9.5" cy="13.4" r="1.05" fill="#fff"/></svg>
<span class="t" style="left:1044.4px;top:215.4px;font-size:14px;color:#23262f;transform:scaleX(1.0155);-webkit-text-stroke:0.55px currentColor;">Anomalies detected in attribute birth_date</span>
<span class="t" style="left:1044.4px;top:242.3px;font-size:14px;color:#3a3e48;transform:scaleX(0.9163);">NULL</span>
<div class="abs" style="left:1044.4px;top:255.5px;width:33px;height:1px;background:#686c74"></div>
<span class="t" style="left:1081.6px;top:242.3px;font-size:14px;color:#60646d;">,</span>
<span class="t" style="left:1090.3px;top:242.3px;font-size:14px;color:#3a3e48;transform:scaleX(1.0667);">N/A</span>
<div class="abs" style="left:1090.3px;top:255.5px;width:25px;height:1px;background:#686c74"></div>
<span class="t" style="left:1119.2px;top:242.3px;font-size:14px;color:#60646d;transform:scaleX(0.9441);">, and</span>
<span class="t" style="left:1157.8px;top:242.3px;font-size:14px;color:#3a3e48;transform:scaleX(0.9717);">1900-01-01</span>
<div class="abs" style="left:1157.4px;top:255.5px;width:70.4px;height:1px;background:#686c74"></div>
<span class="t" style="left:1235.7px;top:242.3px;font-size:14px;color:#60646d;transform:scaleX(0.9883);">are outliers.</span>
<span class="t" style="left:1044.4px;top:262.4px;font-size:14px;color:#60646d;transform:scaleX(1.0053);">Apply automatic cleansing before using this data.</span>
<div class="abs" style="left:1044.4px;top:295px;width:14.4px;height:81.8px;background:#1755dd"></div>
<div class="abs" style="left:1064.3px;top:295px;width:14.6px;height:81.8px;background:#1755dd"></div>
<div class="abs" style="left:1084.4px;top:364.2px;width:14.6px;height:12.6px;background:#1755dd"></div>
<div class="abs" style="left:1104.2px;top:372.6px;width:15px;height:4.2px;background:#d3d9e0"></div>
<div class="abs" style="left:1124.2px;top:372.6px;width:15px;height:4.2px;background:#d3d9e0"></div>
<div class="abs" style="left:1144.2px;top:372.6px;width:15px;height:4.2px;background:#d3d9e0"></div>
<div class="abs" style="left:1164.2px;top:372.6px;width:15px;height:4.2px;background:#d3d9e0"></div>
<div class="abs" style="left:1184.2px;top:372.6px;width:15px;height:4.2px;background:#d3d9e0"></div>
<div class="abs" style="left:1204.2px;top:372.6px;width:15px;height:4.2px;background:#d3d9e0"></div>
<div class="abs" style="left:1224.2px;top:372.6px;width:15px;height:4.2px;background:#d3d9e0"></div>
<div class="abs" style="left:1244.2px;top:372.6px;width:15px;height:4.2px;background:#d3d9e0"></div>
<div class="abs" style="left:1264.2px;top:372.6px;width:15px;height:4.2px;background:#d3d9e0"></div>
<div class="abs" style="left:1284.2px;top:372.6px;width:15px;height:4.2px;background:#d3d9e0"></div>
<div class="abs" style="left:1304.2px;top:372.6px;width:15px;height:4.2px;background:#d3d9e0"></div>
<div class="abs" style="left:1324.2px;top:372.6px;width:15px;height:4.2px;background:#d3d9e0"></div>
<div class="abs" style="left:1344.2px;top:372.6px;width:15px;height:4.2px;background:#d3d9e0"></div>
<div class="abs" style="left:1364.2px;top:372.6px;width:15px;height:4.2px;background:#d3d9e0"></div>
<span class="t" style="left:1112.0px;top:312.1px;font-size:20px;color:#23283a;transform:scaleX(1.0912);-webkit-text-stroke:0.65px currentColor;">3 outlier values</span>
<span class="t" style="left:1112.0px;top:338.0px;font-size:12.5px;color:#9296a4;transform:scaleX(1.0241);">detected in given attribute</span>
<div class="abs" style="left:1044.4px;top:394px;width:129px;height:30.4px;border:1px solid #eff0f3;border-radius:3px;background:#fff"></div>
<span class="t" style="left:1068.5px;top:402.1px;font-size:14px;color:#cbced3;transform:scaleX(0.9780);">Cleanse data</span>
<div class="abs" style="left:994px;top:447.6px;width:422px;height:1.3px;background:#e3e5e9"></div>
<svg style="position:absolute;left:1014.3px;top:472px" width="19" height="17" viewBox="0 0 19 17" ><path d="M9.5 1 C10.1 1 10.6 1.3 10.9 1.9 L18.1 14.4 C18.7 15.4 18 16.4 16.9 16.4 H2.1 C1 16.4 0.3 15.4 0.9 14.4 L8.1 1.9 C8.4 1.3 8.9 1 9.5 1 Z" fill="#f6a22e"/><rect x="8.6" y="5.6" width="1.8" height="5.6" rx="0.6" fill="#fff"/><circle cx="9.5" cy="13.4" r="1.05" fill="#fff"/></svg>
<span class="t" style="left:1044.4px;top:474.3px;font-size:14px;color:#23262f;transform:scaleX(1.0017);-webkit-text-stroke:0.55px currentColor;">Unexpected length and record count</span>
<span class="t" style="left:1044.4px;top:501.3px;font-size:14px;color:#60646d;transform:scaleX(0.9959);">Detected based on previous 14 versions of the profile</span>
<div class="abs" style="left:1044.4px;top:526px;width:118.4px;height:32px;border:1px solid #d7d9de;border-radius:3px;background:#fff"></div>
<span class="t" style="left:1068.2px;top:535.0px;font-size:14px;color:#2b2f39;transform:scaleX(0.9817);">Open detail</span>
<div class="card" style="left:994px;top:598.5px;width:422px;height:230px"></div>
<span class="t" style="left:1019.0px;top:623.8px;font-size:17px;color:#242833;-webkit-text-stroke:0.6px currentColor;transform:scaleX(1.0370);">Relations</span>
<div class="abs" style="left:1017.9px;top:640.9px;width:75.4px;height:1.2px;background:#464a53"></div>
<svg style="position:absolute;left:1101.7px;top:622.2px" width="20" height="20" viewBox="0 0 20 20" ><circle cx="10" cy="10" r="8.7" fill="none" stroke="#a0a2a6" stroke-width="1.9"/><rect x="8.85" y="8.7" width="2.3" height="5.9" fill="#a0a2a6"/><circle cx="10" cy="5.9" r="1.3" fill="#a0a2a6"/></svg>
<svg style="position:absolute;left:1018.6px;top:671.4px" width="19" height="18" viewBox="0 0 19 18" ><g fill="#9c9ea3"><rect x="0.5" y="0" width="5.7" height="4.9"/><circle cx="11.6" cy="2.45" r="2.85"/><rect x="12.6" y="11.8" width="6" height="5.5"/><path d="M6.2 11.6 L10.2 14.7 L6.2 17.8 Z"/></g><path d="M14 2.5 H17.8 V8.4 H1.4 V14.7 H7" fill="none" stroke="#9c9ea3" stroke-width="1.8"/></svg>
<span class="t" style="left:1059.0px;top:673.0px;font-size:14px;color:#60646d;transform:scaleX(0.9977);">Parent of</span>
<svg style="position:absolute;left:1228px;top:672.9px" width="18" height="14" viewBox="0 0 18 14" ><g fill="none" stroke="#9c9ea3" stroke-width="1.6"><rect x="0.9" y="0.9" width="16.2" height="12"/><path d="M0.9 4.9 H17.1 M0.9 8.9 H17.1 M9 0.9 V12.9"/></g></svg>
<span class="t" style="left:1255.0px;top:673.0px;font-size:14px;color:#60646d;transform:scaleX(0.9934);">Party_full.csv</span>
<div class="abs" style="left:1016.6px;top:701.0px;width:377px;height:1.2px;background:#dfe1e5"></div>
<svg style="position:absolute;left:1018.6px;top:715.4px" width="19" height="18" viewBox="0 0 19 18" ><g fill="#9c9ea3"><rect x="0.5" y="0" width="5.7" height="4.9"/><circle cx="11.6" cy="2.45" r="2.85"/><rect x="12.6" y="11.8" width="6" height="5.5"/><path d="M6.2 11.6 L10.2 14.7 L6.2 17.8 Z"/></g><path d="M14 2.5 H17.8 V8.4 H1.4 V14.7 H7" fill="none" stroke="#9c9ea3" stroke-width="1.8"/></svg>
<span class="t" style="left:1059.0px;top:717.0px;font-size:14px;color:#60646d;transform:scaleX(0.9629);">Governed by</span>
<svg style="position:absolute;left:1228.6px;top:716.4px" width="20" height="21" viewBox="0 0 20 21" ><rect x="0.9" y="0.9" width="17.4" height="17.4" rx="0.5" fill="none" stroke="#9c9ea3" stroke-width="1.7"/></svg><span class="t" style="left:1234.3px;top:719.1px;font-size:15px;color:#8a8d93;-webkit-text-stroke:0.25px currentColor;">?</span>
<span class="t" style="left:1255.0px;top:717.0px;font-size:14px;color:#60646d;transform:scaleX(0.9458);">GDPR policy</span>
<div class="abs" style="left:1016.6px;top:745.0px;width:377px;height:1.2px;background:#dfe1e5"></div>
<svg style="position:absolute;left:1018.6px;top:758.8000000000001px" width="19" height="18" viewBox="0 0 19 18" ><g fill="#9c9ea3"><rect x="0.5" y="0" width="5.7" height="4.9"/><circle cx="11.6" cy="2.45" r="2.85"/><rect x="12.6" y="11.8" width="6" height="5.5"/><path d="M6.2 11.6 L10.2 14.7 L6.2 17.8 Z"/></g><path d="M14 2.5 H17.8 V8.4 H1.4 V14.7 H7" fill="none" stroke="#9c9ea3" stroke-width="1.8"/></svg>
<span class="t" style="left:1059.0px;top:760.4px;font-size:14px;color:#60646d;transform:scaleX(1.0182);">Transformed items</span>
<svg style="position:absolute;left:1228px;top:760.3000000000001px" width="18" height="14" viewBox="0 0 18 14" ><g fill="none" stroke="#9c9ea3" stroke-width="1.6"><rect x="0.9" y="0.9" width="16.2" height="12"/><path d="M0.9 4.9 H17.1 M0.9 8.9 H17.1 M9 0.9 V12.9"/></g></svg>
<span class="t" style="left:1255.0px;top:760.4px;font-size:14px;color:#60646d;transform:scaleX(0.9870);">Party_full</span>
<div class="abs" style="left:1016.6px;top:788.4px;width:377px;height:1.2px;background:#dfe1e5"></div>
<svg style="position:absolute;left:1018.6px;top:802.2px" width="19" height="18" viewBox="0 0 19 18" ><g fill="none" stroke="#9a9da3" stroke-width="1.5"><rect x="1" y="1" width="5.6" height="5.6"/><rect x="10.4" y="1" width="5.6" height="5.6"/></g></svg>
<span class="t" style="left:1059.0px;top:803.8px;font-size:14px;color:#60646d;transform:scaleX(0.9872);">Environments</span>
<svg style="position:absolute;left:1228px;top:803.7px" width="18" height="14" viewBox="0 0 18 14" ><g fill="none" stroke="#9c9ea3" stroke-width="1.6"><rect x="0.9" y="0.9" width="16.2" height="12"/><path d="M0.9 4.9 H17.1 M0.9 8.9 H17.1 M9 0.9 V12.9"/></g></svg>
<span class="t" style="left:1255.0px;top:803.8px;font-size:14px;color:#60646d;transform:scaleX(0.9725);">Party_full_QA</span>

</div>
</body>
</html>
